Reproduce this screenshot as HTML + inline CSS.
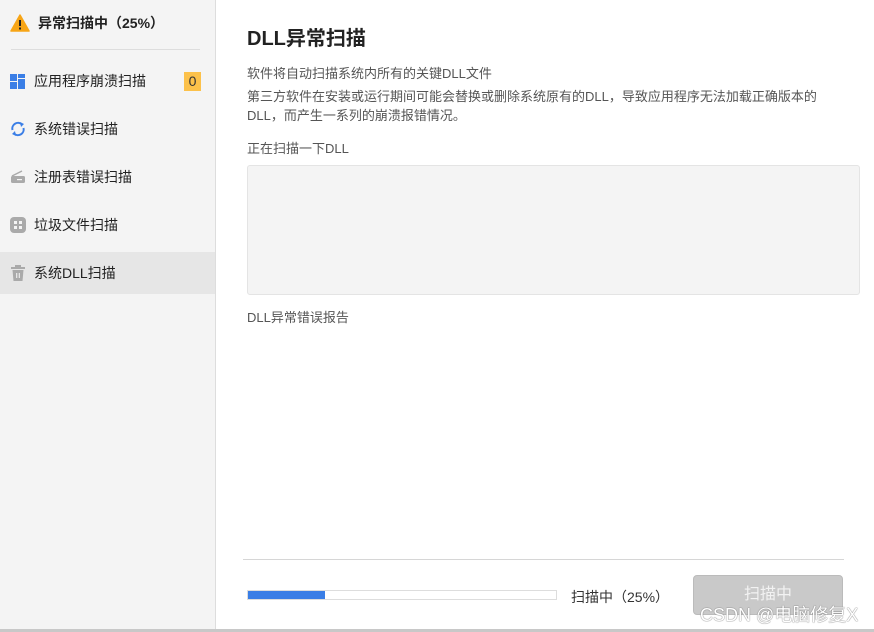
<!DOCTYPE html>
<html><head><meta charset="utf-8"><style>
*{margin:0;padding:0;box-sizing:border-box}
body{width:874px;height:632px;overflow:hidden;background:#fff;font-family:"Liberation Sans","Noto Sans CJK SC",sans-serif;position:relative;color:#333}
.side{position:absolute;left:0;top:0;width:216px;height:630px;background:#f4f4f4;border-right:1px solid #ddd}
.hd{position:absolute;left:10px;top:13px;font-size:14px;font-weight:bold;color:#222;display:flex;align-items:center}
.sep{position:absolute;left:11px;top:49px;width:189px;height:1px;background:#ddd}
.it{position:absolute;left:0;width:215px;height:42px;display:flex;align-items:center;font-size:14px;color:#222}
.it svg{position:absolute;left:10px}
.it span.t{position:absolute;left:34px}
.badge{position:absolute;left:184px;top:12px;width:17px;height:19px;background:#fcc14a;font-size:14px;text-align:center;line-height:19px;color:#333}
.main{position:absolute;left:247px}
.bot{position:absolute;left:0;top:629px;width:874px;height:3px;background:#c8c8c8}
</style></head><body>
<div class="side">
  <div class="hd"><svg width="20" height="18" viewBox="0 0 20 18"><path d="M10 1 L19 17 L1 17 Z" fill="#f7a516" stroke="#f7a516" stroke-linejoin="round" stroke-width="1.5"/><rect x="9" y="6" width="2" height="6" fill="#222"/><rect x="9" y="13.5" width="2" height="2" fill="#222"/></svg><span style="margin-left:8px">异常扫描中（25%）</span></div>
  <div class="sep"></div>
  <div class="it" style="top:60px"><svg width="15" height="15" viewBox="0 0 15 15"><rect x="0" y="0" width="7" height="7" fill="#3a7ee6"/><rect x="8" y="0" width="7" height="4" fill="#3a7ee6"/><rect x="0" y="8" width="7" height="7" fill="#3a7ee6"/><rect x="8" y="5" width="7" height="10" fill="#3a7ee6"/></svg><span class="t">应用程序崩溃扫描</span><div class="badge">0</div></div>
  <div class="it" style="top:108px"><svg width="16" height="16" viewBox="0 0 16 16"><path d="M2.5 9 A5.7 5.7 0 0 1 12 3.5" fill="none" stroke="#3a7ee6" stroke-width="2"/><path d="M13.5 7 A5.7 5.7 0 0 1 4 12.5" fill="none" stroke="#3a7ee6" stroke-width="2"/><path d="M10 1 L14 3 L11 6Z" fill="#3a7ee6"/><path d="M6 15 L2 13 L5 10Z" fill="#3a7ee6"/></svg><span class="t">系统错误扫描</span></div>
  <div class="it" style="top:156px"><svg width="16" height="16" viewBox="0 0 16 16"><path d="M2 7 L12 2" stroke="#aaa" stroke-width="1.5"/><rect x="1" y="7" width="14" height="7" rx="1.5" fill="#aaa"/><rect x="7" y="10" width="5" height="1.2" fill="#f4f4f4"/></svg><span class="t">注册表错误扫描</span></div>
  <div class="it" style="top:204px"><svg width="16" height="16" viewBox="0 0 16 16"><rect x="0" y="0" width="16" height="16" rx="4" fill="#aaa"/><rect x="4" y="4" width="3" height="3" fill="#f4f4f4"/><rect x="9" y="4" width="3" height="3" fill="#f4f4f4"/><rect x="4" y="9" width="3" height="3" fill="#f4f4f4"/><rect x="9" y="9" width="3" height="3" fill="#f4f4f4"/></svg><span class="t">垃圾文件扫描</span></div>
  <div class="it" style="top:252px;background:#e6e6e6"><svg width="16" height="16" viewBox="0 0 16 16"><rect x="5" y="0" width="6" height="2" fill="#aaa"/><rect x="1" y="2" width="14" height="2" fill="#aaa"/><path d="M2.5 5 H13.5 L12.5 16 H3.5Z" fill="#aaa"/><rect x="6" y="8" width="1.3" height="5" fill="#e6e6e6"/><rect x="8.7" y="8" width="1.3" height="5" fill="#e6e6e6"/></svg><span class="t">系统DLL扫描</span></div>
</div>
<div class="main" style="top:22px;font-size:20px;font-weight:bold;color:#222">DLL异常扫描</div>
<div class="main" style="top:63px;font-size:13px;color:#555">软件将自动扫描系统内所有的关键DLL文件</div>
<div class="main" style="top:87px;font-size:13px;color:#555;line-height:19px;width:590px">第三方软件在安装或运行期间可能会替换或删除系统原有的DLL，导致应用程序无法加载正确版本的DLL，而产生一系列的崩溃报错情况。</div>
<div class="main" style="top:138px;font-size:13px;color:#555">正在扫描一下DLL</div>
<div class="main" style="top:165px;width:613px;height:130px;background:#f4f4f4;border:1px solid #e4e4e4;border-radius:3px"></div>
<div class="main" style="top:307px;font-size:13px;color:#555">DLL异常错误报告</div>
<div style="position:absolute;left:243px;top:559px;width:601px;height:1px;background:#d6d6d6"></div>
<div style="position:absolute;left:247px;top:590px;width:310px;height:10px;border:1px solid #ddd;background:#fff"><div style="width:77px;height:8px;background:#3a7ee6"></div></div>
<div style="position:absolute;left:571px;top:587px;font-size:14px;color:#333">扫描中（25%）</div>
<div style="position:absolute;left:693px;top:575px;width:150px;height:40px;background:#c9c9c9;border:1px solid #bbb;border-radius:4px;color:#f2f2f2;font-size:16px;text-align:center;line-height:38px">扫描中</div>
<div style="position:absolute;left:700px;top:601px;font-size:18px;color:#fff;text-shadow:0 0 1px #777,0 0 1px #777">CSDN @电脑修复X</div>
<div class="bot"></div>
</body></html>
